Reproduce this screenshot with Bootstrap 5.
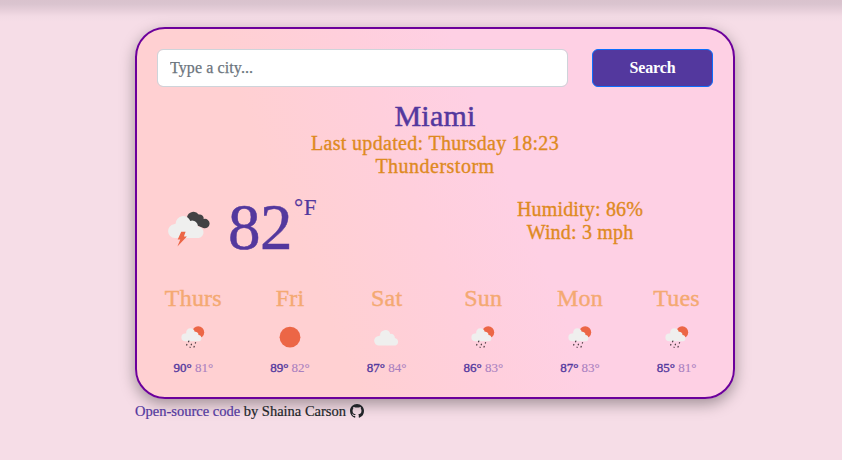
<!DOCTYPE html>
<html lang="en">
<head>
<meta charset="utf-8">
<meta name="viewport" content="width=device-width, initial-scale=1">
<title>Weather</title>
<link href="https://cdn.jsdelivr.net/npm/bootstrap@5.3.0/dist/css/bootstrap.min.css" rel="stylesheet">
<style>
body{font-family:"Liberation Serif","Times New Roman",serif;background:linear-gradient(#d9c2cd 0,#dac4cf 4px,#e8d0db 11px,#f2dae4 16px,#f6dde7 22px) #f6dde7;min-height:460px;overflow:hidden;padding-left:28px}
.weather-shell{width:600px;padding-top:27px}
.weather-app{height:372px;border:2px solid #6c009b;border-radius:30px;padding:20px;background:linear-gradient(68deg,#ffd0d2 30%,#ffcfdc 48%,#fed0e4 62%);box-shadow:0 5px 15px rgba(0,0,0,.35)}
.city-input{height:38px;border-color:#ced4da;letter-spacing:.1px}
.city-input::placeholder{color:#6c757d;-webkit-text-stroke:.25px}
.search-btn{height:38px;background:#53389e;letter-spacing:-.1px}
.city-name{font-size:30px;line-height:33px;color:#53389e;letter-spacing:.2px;-webkit-text-stroke:.5px;margin-top:12px}
.detail{font-size:20px;line-height:23px;color:#de8a1f;letter-spacing:.49px;-webkit-text-stroke:.35px}
.updated{letter-spacing:.32px}
.detail-side{letter-spacing:.18px}
.current{margin-top:20px;height:84.5px}
.degrees{font-size:65px;line-height:64px;color:#53389e;-webkit-text-stroke:.5px;margin:-3px 0 0 16px;letter-spacing:-.5px}
.unit{font-size:23px;line-height:25px;color:#53389e;-webkit-text-stroke:.2px;margin:-3px 0 0 2px;letter-spacing:.5px}
.storm{margin:6px 0 0 7px}
.day-name{font-size:24px;line-height:30px;color:#f4a972;-webkit-text-stroke:.4px;letter-spacing:.2px}
.day-icon{margin:8px auto 5px}
.day-temps{font-size:13px;line-height:20px;color:#53389e;-webkit-text-stroke:.35px}
.day-low{color:#a97fc0;-webkit-text-stroke:.1px}
.credit{font-size:14.5px;line-height:24px;-webkit-text-stroke:.2px}
.credit a{color:#53389e}
</style>
</head>
<body>
<svg width="0" height="0" class="position-absolute" aria-hidden="true">
<symbol id="cloud" viewBox="0 0 32 32"><path fill="#efefee" d="M8 24.4a4.7 4.7 0 0 1-.3-9.4 2.9 2.9 0 0 1 1.4-.4 5.2 5.2 0 0 1 10.2-1.7 3.9 3.9 0 0 1 4.6 4 3.9 3.9 0 0 1 .6 7.5Z"/></symbol>
<symbol id="rain" viewBox="0 0 32 32"><circle cx="21.2" cy="11.3" r="6" fill="#ec6646"/><path fill="#efefee" d="M8.4 20.3a3.9 3.9 0 0 1-.2-7.8 2.3 2.3 0 0 1 1-.3 4.3 4.3 0 0 1 8.5-1.4 3.2 3.2 0 0 1 3.8 3.2 3.2 3.2 0 0 1 .5 6.3Z"/><path d="m12 19.6-.6 1.6m-1.4 1.8-.5 1.5m5.1-1.7-.5 1.4m4.6-3-.5 1.3m-4.9 3.3-.4 1m4.5-1.9-.6 1.6" stroke="#4b3d43" stroke-width="1.2" fill="none"/></symbol>
</svg>
<div class="weather-shell mx-auto">
<main class="weather-app">
<form class="row" onsubmit="return false">
<div class="col-9"><input class="form-control city-input" type="search" placeholder="Type a city..." aria-label="City"></div>
<div class="col-3"><button class="btn btn-primary w-100 fw-bold search-btn" type="submit">Search</button></div>
</form>
<div class="text-center">
<h1 class="city-name mb-0 fw-normal">Miami</h1>
<div class="detail updated">Last updated: Thursday 18:23</div>
<div class="detail">Thunderstorm</div>
</div>
<div class="row current">
<div class="col-6 d-flex align-items-start">
<svg class="storm flex-shrink-0" width="48" height="48" viewBox="0 0 48 48"><path fill="#424244" d="M23 13a6.5 6.5 0 0 1 11.7-2.4 4 4 0 0 1 5 4.4 4.7 4.7 0 1 1-.5 8.9L25 18Z"/><path fill="#efefee" d="M10.6 34a6.9 6.9 0 0 1-.7-13.7 4 4 0 0 1 1.7-.5 7.6 7.6 0 0 1 14.7-2.8 5.5 5.5 0 0 1 7.5 5.5 5.8 5.8 0 0 1 1 11.5Z"/><path fill="#ec6646" d="M17.2 27.8h4.4l-1.7 4.6h3l-9.5 10 2.9-6.9h-2.6Z"/></svg>
<div class="degrees">82</div><div class="unit">°F</div>
</div>
<div class="col-6 text-center"><div class="detail detail-side">Humidity: 86%</div><div class="detail detail-side">Wind: 3 mph</div></div>
</div>
<div class="row text-center">
<div class="col-2 px-0"><div class="day-name">Thurs</div><svg class="day-icon d-block" width="32" height="32"><use href="#rain"/></svg><div class="day-temps">90° <span class="day-low">81°</span></div></div>
<div class="col-2 px-0"><div class="day-name">Fri</div><svg class="day-icon d-block" width="32" height="32"><circle cx="16" cy="16.2" r="10.4" fill="#ec6646"/></svg><div class="day-temps">89° <span class="day-low">82°</span></div></div>
<div class="col-2 px-0"><div class="day-name">Sat</div><svg class="day-icon d-block" width="32" height="32"><use href="#cloud"/></svg><div class="day-temps">87° <span class="day-low">84°</span></div></div>
<div class="col-2 px-0"><div class="day-name">Sun</div><svg class="day-icon d-block" width="32" height="32"><use href="#rain"/></svg><div class="day-temps">86° <span class="day-low">83°</span></div></div>
<div class="col-2 px-0"><div class="day-name">Mon</div><svg class="day-icon d-block" width="32" height="32"><use href="#rain"/></svg><div class="day-temps">87° <span class="day-low">83°</span></div></div>
<div class="col-2 px-0"><div class="day-name">Tues</div><svg class="day-icon d-block" width="32" height="32"><use href="#rain"/></svg><div class="day-temps">85° <span class="day-low">81°</span></div></div>
</div>
</main>
<footer class="credit d-flex align-items-center"><span><a href="#" class="text-decoration-none">Open-source code</a> by Shaina Carson</span>
<svg class="ms-1" width="14" height="14" viewBox="0 0 16 16" fill="#212529"><path d="M8 0C3.58 0 0 3.58 0 8c0 3.54 2.29 6.53 5.47 7.59.4.07.55-.17.55-.38 0-.19-.01-.82-.01-1.49-2.01.37-2.53-.49-2.69-.94-.09-.23-.48-.94-.82-1.13-.28-.15-.68-.52-.01-.53.63-.01 1.08.58 1.23.82.72 1.21 1.87.87 2.33.66.07-.52.28-.87.51-1.07-1.78-.2-3.64-.89-3.64-3.95 0-.87.31-1.59.82-2.15-.08-.2-.36-1.02.08-2.12 0 0 .67-.21 2.2.82a7.6 7.6 0 0 1 4 0c1.53-1.04 2.2-.82 2.2-.82.44 1.1.16 1.92.08 2.12.51.56.82 1.27.82 2.15 0 3.07-1.87 3.75-3.65 3.95.29.25.54.73.54 1.48 0 1.07-.01 1.93-.01 2.2 0 .21.15.46.55.38A8 8 0 0 0 16 8c0-4.42-3.58-8-8-8Z"/></svg></footer>
</div>
<script src="https://cdn.jsdelivr.net/npm/bootstrap@5.3.0/dist/js/bootstrap.bundle.min.js"></script>
</body>
</html>
